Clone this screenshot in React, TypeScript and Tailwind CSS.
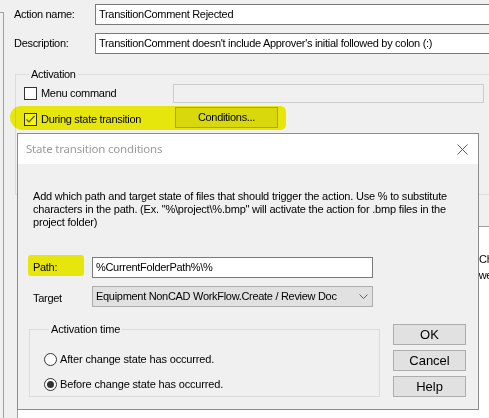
import React from "react";

function CheckBox({ checked }: { checked?: boolean }) {
  return (
    <div className="w-[13px] h-[13px] shrink-0 border border-[#333333] bg-white flex items-center justify-center">
      {checked && (
        <svg width="11" height="11" viewBox="0 0 11 11">
          <polyline points="1.5,5.5 4,8 9.5,2" fill="none" stroke="#5a5a5a" strokeWidth="1.2" />
        </svg>
      )}
    </div>
  );
}

function Radio({ checked }: { checked?: boolean }) {
  return (
    <div className="w-[13px] h-[13px] shrink-0 rounded-full border border-[#333333] bg-white flex items-center justify-center">
      {checked && <div className="w-[7px] h-[7px] rounded-full bg-[#333333]" />}
    </div>
  );
}

function WinButton({ label, className }: { label: string; className?: string }) {
  return (
    <div
      className={
        "h-[21px] border border-[#adadad] bg-[#e1e1e1] flex items-center justify-center " +
        (className ?? "")
      }
    >
      {label}
    </div>
  );
}

export default function App() {
  return (
    <div className="relative w-[489px] h-[418px] overflow-hidden bg-[#f0f0f0] text-black text-[11px] tracking-[-0.3px] font-['Liberation_Sans',Arial,sans-serif]">
      {/* Main window */}
      <div className="flex h-full">
        <div className="w-[4px] shrink-0 mt-[12px] border-t border-r border-[#a0a0a0]" />
        <div className="flex-1 flex flex-col pt-[4px] pl-[10px] min-w-0">
          <div className="flex items-center h-[21px]">
            <span className="w-[81px] shrink-0">Action name:</span>
            <div className="flex-1 h-[21px] -mr-[20px] border border-[#7a7a7a] bg-white pl-[3px] flex items-center">
              TransitionComment Rejected
            </div>
          </div>
          <div className="flex items-center h-[21px] mt-[8px]">
            <span className="w-[81px] shrink-0">Description:</span>
            <div className="flex-1 h-[21px] -mr-[20px] border border-[#7a7a7a] bg-white pl-[3px] flex items-center whitespace-nowrap">
              TransitionComment doesn't include Approver's initial followed by colon (:)
            </div>
          </div>

          {/* Activation group */}
          <fieldset className="ml-[1px] -mr-[30px] mt-[14px] h-[127px] border border-[#dcdcdc] pl-[8px]">
            <legend className="ml-[5px] px-[2px] leading-[12px]">Activation</legend>
            <div className="flex items-center h-[19px] mt-[4px]">
              <div className="w-[149px] flex items-center gap-[4px]">
                <CheckBox />
                <span>Menu command</span>
              </div>
              <div className="w-[311px] h-[19px] border border-[#cccccc] bg-[#f0f0f0]" />
            </div>
            <div className="flex items-center h-[21px] mt-[4px]">
              <div className="w-[151px] flex items-center gap-[4px] pt-[3px]">
                <CheckBox checked />
                <span>During state transition</span>
              </div>
              <WinButton label="Conditions..." className="w-[103px]" />
            </div>
          </fieldset>

          {/* List area behind the dialog */}
          <div className="ml-[3px] -mr-[30px] mt-[31px] flex-1 border-t border-l border-[#a0a0a0] bg-white pt-[24px]">
            <div className="pl-[461px] h-[16px] whitespace-nowrap">Checked in</div>
            <div className="pl-[449px] h-[16px] whitespace-nowrap">Lowest</div>
          </div>
        </div>
      </div>

      {/* Dialog window */}
      <div className="absolute left-[17px] top-[133px] w-[462px] h-[277px] border border-[#8c8c8c] bg-[#f0f0f0] flex flex-col">
        <div className="h-[30px] bg-white flex items-center justify-between pl-[8px] pr-[10px]">
          <span className="text-[11.5px] tracking-[-0.2px] text-[#9a9a9a] font-['Noto_Sans',sans-serif]">
            State transition conditions
          </span>
          <svg width="11" height="11" viewBox="0 0 11 11">
            <path d="M0.5 0.5 L10.5 10.5 M10.5 0.5 L0.5 10.5" stroke="#5a5a5a" strokeWidth="1" />
          </svg>
        </div>
        <div className="flex-1 flex flex-col pl-[15px]">
          <p className="w-[428px] mt-[26px] leading-[13px] tracking-[-0.2px]">
            Add which path and target state of files that should trigger the action. Use % to substitute
            characters in the path. (Ex. "%\project\%.bmp" will activate the action for .bmp files in the
            project folder)
          </p>
          <div className="flex items-center mt-[28px]">
            <span className="w-[59px] shrink-0">Path:</span>
            <div className="w-[281px] h-[21px] border border-[#7a7a7a] bg-white pl-[3px] flex items-center">
              %CurrentFolderPath%\%
            </div>
          </div>
          <div className="flex items-center mt-[8px]">
            <span className="w-[59px] shrink-0 pt-[3px]">Target</span>
            <div className="w-[281px] h-[21px] border border-[#adadad] bg-[#e1e1e1] pl-[3px] pr-[4px] flex items-center justify-between">
              <span>Equipment NonCAD WorkFlow.Create / Review Doc</span>
              <svg width="9" height="6" viewBox="0 0 9 6">
                <polyline points="0.5,0.5 4.5,4.5 8.5,0.5" fill="none" stroke="#606060" strokeWidth="1" />
              </svg>
            </div>
          </div>
          <div className="flex items-start mt-[16px] -ml-[4px]">
            <fieldset className="w-[351px] h-[74px] border border-[#dcdcdc] pl-[14px] tracking-[-0.15px]">
              <legend className="ml-[5px] px-[2px] leading-[12px]">Activation time</legend>
              <div className="flex items-center gap-[3px] h-[16px] mt-[16px]">
                <Radio />
                <span>After change state has occurred.</span>
              </div>
              <div className="flex items-center gap-[3px] h-[16px] mt-[9px]">
                <Radio checked />
                <span>Before change state has occurred.</span>
              </div>
            </fieldset>
            <div className="ml-[13px] mt-[1px] flex flex-col gap-[5px] text-[13px] tracking-[0px]">
              <WinButton label="OK" className="w-[73px]" />
              <WinButton label="Cancel" className="w-[73px]" />
              <WinButton label="Help" className="w-[73px]" />
            </div>
          </div>
        </div>
      </div>

      {/* Highlighter marks */}
      <div className="absolute left-[10px] top-[106px] w-[276px] h-[24px] bg-[#f5f500] mix-blend-multiply rounded-[12px_6px_6px_14px] opacity-95" />
      <div className="absolute left-[28px] top-[255px] w-[56px] h-[21px] bg-[#f5f500] mix-blend-multiply rounded-[3px] opacity-95" />
    </div>
  );
}
